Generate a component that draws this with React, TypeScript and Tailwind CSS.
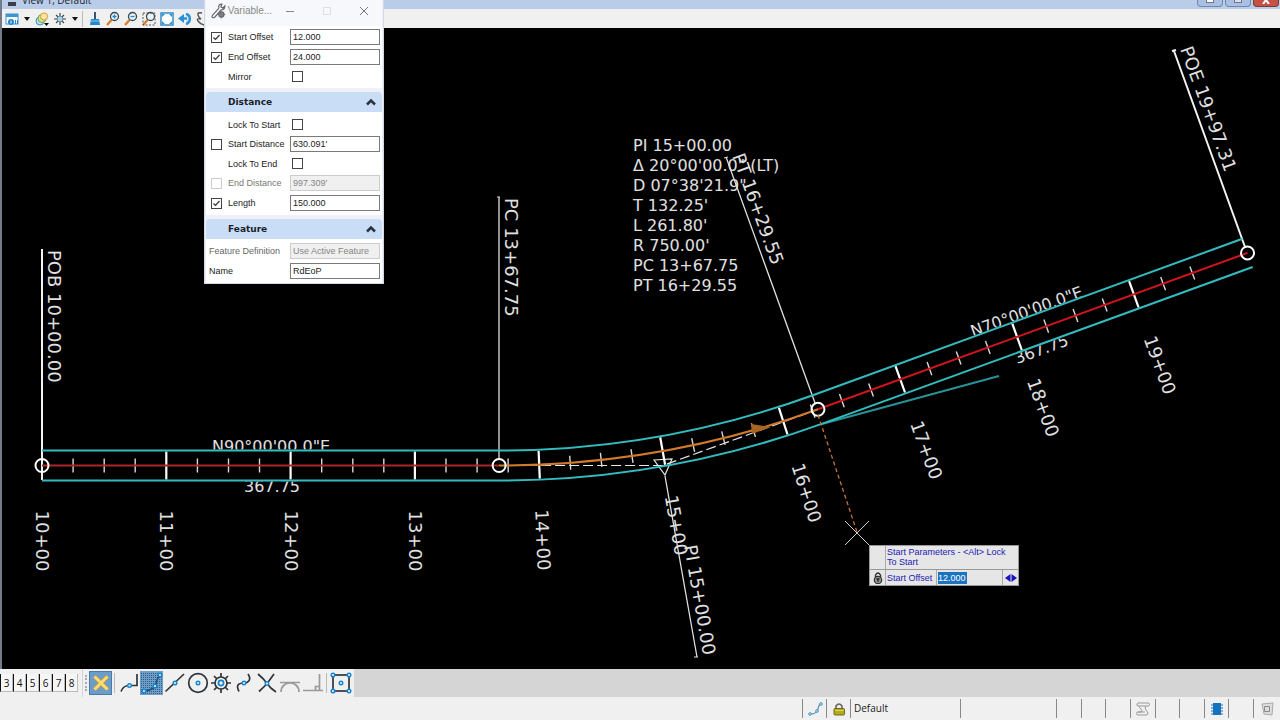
import React, { useState } from 'react';

// Drawing scale and alignment geometry (pixels, y down)
const SCALE = 1.243;
const START = { x: 42, y: 465.5 };
const PC_STATION = 1367.75;
const PT_STATION = 1629.55;
const POE_STATION = 1997.31;
const RADIUS = 750 * SCALE;
const PC = { x: START.x + (PC_STATION - 1000) * SCALE, y: START.y };
const CENTER = { x: PC.x, y: PC.y - RADIUS };

const placeAt = (station: number, offset = 0) => {
  if (station <= PC_STATION) {
    return { x: START.x + (station - 1000) * SCALE, y: START.y + offset, angle: 0 };
  }
  const arc = Math.min(station, PT_STATION) - PC_STATION;
  const theta = arc / 750;
  const past = Math.max(station - PT_STATION, 0) * SCALE;
  return {
    x: CENTER.x + (RADIUS + offset) * Math.sin(theta) + past * Math.cos(theta),
    y: CENTER.y + (RADIUS + offset) * Math.cos(theta) - past * Math.sin(theta),
    angle: (theta * 180) / Math.PI,
  };
};

const at = (station: number, offset = 0) => {
  const p = placeAt(station, offset);
  return `${p.x.toFixed(1)} ${p.y.toFixed(1)}`;
};

const edgePath = (offset: number) => {
  const r = RADIUS + offset;
  return `M${at(1000, offset)} L${at(PC_STATION, offset)} A${r} ${r} 0 0 0 ${at(PT_STATION, offset)} L${at(POE_STATION, offset)}`;
};

const ticks = Array.from({ length: 38 }, (_, i) => 1025 + i * 25);
const stations = Array.from({ length: 10 }, (_, i) => 1000 + i * 100);

const curveData = [
  'PI 15+00.00',
  'Δ 20°00\'00.0" (LT)',
  'D 07°38\'21.9"',
  "T 132.25'",
  "L 261.80'",
  "R 750.00'",
  'PC 13+67.75',
  'PT 16+29.55',
];

const AlignmentDrawing: React.FC = () => (
  <svg
    className="block h-full w-full font-['DejaVu_Sans',sans-serif]"
    viewBox="2 28 1278 641"
    preserveAspectRatio="xMinYMin slice"
    fill="none"
  >
    {/* Curve data and bearings */}
    <g fill="#e0e0e0" fontSize="16">
      {curveData.map((line, i) => (
        <text key={line} x="633" y={151 + i * 20}>{line}</text>
      ))}
      <text x="212" y="452">N90°00'00.0"E</text>
      <text x="244" y="492">367.75</text>
      <text transform="translate(973 337) rotate(-20)">N70°00'00.0"E</text>
      <text transform="translate(1017 364) rotate(-20)">367.75</text>
    </g>

    {/* Corridor surface */}
    <path d={edgePath(0)} stroke="#000" strokeWidth="32" />

    {/* Station labels */}
    <g fill="#e0e0e0" fontSize="18">
      {stations.map(station => {
        const p = placeAt(station);
        return (
          <text
            key={station}
            transform={`translate(${p.x} ${p.y}) rotate(${-p.angle}) translate(-6 45) rotate(90)`}
          >
            {station / 100}+00
          </text>
        );
      })}
      <text transform="translate(48 250) rotate(90)">POB 10+00.00</text>
      <text transform="translate(505 198) rotate(90)">PC 13+67.75</text>
      <text transform="translate(732 156) rotate(70)">PT 16+29.55</text>
      <text transform="translate(1180 49) rotate(70)">POE 19+97.31</text>
      <text transform="translate(684 546) rotate(80)">PI 15+00.00</text>
    </g>

    {/* Leader lines */}
    <path d="M42 249V480" stroke="#f2f2f2" strokeWidth="2" />
    <path d="M499 197V460M726 157L815 403M665 476L697 657" stroke="#dedede" strokeWidth="1.3" />
    <path d="M694 657h4M497 197h3M724 158l4-1" stroke="#dedede" />
    <path d="M1174 51L1245 247M1172 51l4-1" stroke="#f2f2f2" strokeWidth="2" />
    <path d={`M${at(PC_STATION)}L662.9 465.5L${at(PT_STATION)}`} stroke="#e8e8e8" strokeWidth="1.2" strokeDasharray="10 4" />
    <path d="M654 460L672 459L665 475Z" stroke="#e8e8e8" strokeWidth="1.2" />

    {/* Ticks along the centerline */}
    {ticks.map(station => {
      const major = station % 100 === 0;
      const half = major ? 14 : 7;
      return (
        <path
          key={station}
          d={`M${at(station, -half)}L${at(station, half)}`}
          stroke={major ? '#fff' : '#d8d8d8'}
          strokeWidth={major ? 2.2 : 1.4}
        />
      );
    })}

    {/* Centerline */}
    <path d={`M${at(1000)}L${at(PC_STATION)}`} stroke="#ab2429" strokeWidth="2" />
    <path d={`M${at(PT_STATION)}L${at(POE_STATION)}`} stroke="#d0161c" strokeWidth="2" />
    <path d={`M${at(PC_STATION)}A${RADIUS} ${RADIUS} 0 0 0 ${at(PT_STATION)}`} stroke="#d27a2c" strokeWidth="2" />
    <path d="M751 424L771 427L752 434Z" fill="#a9641f" />

    {/* Edges of pavement */}
    <path d="M822 424L999 376" stroke="#289299" strokeWidth="2" />
    <path d={edgePath(-15)} stroke="#33bcc0" strokeWidth="2" />
    <path d={edgePath(15)} stroke="#33bcc0" strokeWidth="2" />

    {[1000, PC_STATION, PT_STATION, POE_STATION].map(station => {
      const p = placeAt(station);
      return <circle key={station} cx={p.x} cy={p.y} r="6.5" stroke="#fff" strokeWidth="2" />;
    })}

    {/* Dynamic offset line and cursor */}
    <path d="M818 415L857 532" stroke="#c4723a" strokeWidth="1.3" strokeDasharray="4 3" />
    <path d="M845 521L869 545M869 521L845 545" stroke="#cfcfcf" />
  </svg>
);

const Caret: React.FC = () => (
  <svg className="h-1 w-1.5" viewBox="0 0 6 4"><path d="M0 0h6L3 4z" fill="#111" /></svg>
);

const Magnifier: React.FC<{ children?: React.ReactNode }> = ({ children }) => (
  <svg className="size-4" viewBox="0 0 16 16" fill="none">
    <path d="M6.5 9L2 14" stroke="#d9822b" strokeWidth="2.4" />
    <circle cx="9.5" cy="5.5" r="4" fill="#e9f5fc" stroke="#3b4652" strokeWidth="1.3" />
    {children}
  </svg>
);

const viewTools: { name: string; menu?: boolean; icon: React.ReactNode }[] = [
  {
    name: 'View Attributes',
    menu: true,
    icon: (
      <svg className="size-4" viewBox="0 0 16 16" fill="none">
        <rect x="2" y="3" width="12" height="10" fill="#fff" stroke="#3d94cf" />
        <path d="M2 4.5h12" stroke="#3d94cf" strokeWidth="3" />
        <circle cx="7" cy="11" r="3" fill="#1e86cc" />
        <path d="M7 9.5v3" stroke="#fff" />
        <path d="M11.500 9v4M13.500 9v4" stroke="#1e86cc" />
      </svg>
    ),
  },
  {
    name: 'Display Style',
    icon: (
      <svg className="size-4" viewBox="0 0 16 16" fill="none">
        <circle cx="6" cy="10" r="4" fill="#bce0ef" stroke="#3a91bb" />
        <circle cx="8" cy="7.5" r="4" fill="#cfe6a0" stroke="#71a83c" />
        <circle cx="10" cy="5.5" r="3.6" fill="#f7e3a4" stroke="#dc9a2e" />
        <path d="M10 12h5l-2.5 3z" fill="#111" />
      </svg>
    ),
  },
  {
    name: 'Adjust Brightness',
    menu: true,
    icon: (
      <svg className="size-4" viewBox="0 0 16 16" fill="none">
        <path d="M8 2v12M2 8h12M4 4l8 8M12 4l-8 8" stroke="#3d464e" strokeWidth="1.2" />
        <circle cx="8" cy="8" r="3" fill="#a9d3e4" stroke="#66808e" />
      </svg>
    ),
  },
  {
    name: 'Update View',
    icon: (
      <svg className="size-4" viewBox="0 0 16 16">
        <path d="M7 1h2v7H7z" fill="#35566e" />
        <path d="M4 8h8l1 6H3z" fill="#2489cc" />
        <path d="M4 10h8" stroke="#91c9ed" />
      </svg>
    ),
  },
  { name: 'Zoom In', icon: <Magnifier><path d="M7.5 5.5h4M9.5 3.5v4" stroke="#2084c8" strokeWidth="1.3" /></Magnifier> },
  { name: 'Zoom Out', icon: <Magnifier><path d="M7.5 5.5h4" stroke="#2084c8" strokeWidth="1.3" /></Magnifier> },
  { name: 'Window Area', icon: <Magnifier><rect x="2" y="2" width="12" height="12" stroke="#555" strokeDasharray="2 1.5" /></Magnifier> },
  {
    name: 'Fit View',
    icon: (
      <svg className="size-4" viewBox="0 0 16 16" fill="none">
        <rect x="2" y="2" width="12" height="12" fill="#fff" stroke="#2583c4" strokeWidth="1.4" />
        <path d="M3 6V3h3zM10 3h3v3zM13 10v3h-3zM6 13H3v-3z" fill="#2994d8" />
      </svg>
    ),
  },
  {
    name: 'Rotate View',
    icon: (
      <svg className="size-4" viewBox="0 0 16 16" fill="none">
        <path d="M4 7.5h6M9 3c5 1 5 8 0 10" stroke="#2691d6" strokeWidth="2.6" />
        <path d="M1 7.5L7 3v9z" fill="#2691d6" />
        <path d="M9 4.5c3 1 3 5 0 7" stroke="#8bcaef" />
      </svg>
    ),
  },
  {
    name: 'Pan View',
    icon: (
      <svg className="size-4" viewBox="0 0 16 16" fill="none">
        <path d="M7 2Q2 1 3 4T6 8Q1 7 3 10T9 14" stroke="#555" strokeWidth="1.4" />
      </svg>
    ),
  },
];

const Node: React.FC<{ x: number; y: number }> = ({ x, y }) => (
  <circle cx={x} cy={y} r="1.8" fill="#d8effc" stroke="#1684cc" strokeWidth="1.4" />
);

const INK = '#30343a';

const snapTools: { name: string; active?: boolean; icon: React.ReactNode }[] = [
  { name: 'Nearest Snap', icon: <><path d="M4 20.500Q6 14.500 12.500 14.500H20V3" stroke={INK} /><Node x={12.5} y={14.5} /></> },
  {
    name: 'Key-point Snap',
    active: true,
    icon: (
      <>
        <g stroke="#2e5d87" strokeWidth="1" strokeDasharray="1 1">
          {[2, 4, 6, 8, 10, 12, 14, 16, 18, 20, 22].map(y => <path key={y} d={`M1 ${y + 0.5}h22`} />)}
        </g>
        <path d="M4 20Q15 19 16 13T20 4" stroke="#1d4f7a" strokeWidth="1.6" />
        <Node x={4} y={20} /><Node x={15} y={15} /><Node x={20} y={4} />
      </>
    ),
  },
  { name: 'Midpoint Snap', icon: <><path d="M2.500 20.500L21 3" stroke={INK} /><Node x={12} y={12} /></> },
  { name: 'Center Snap', icon: <><circle cx="12" cy="12" r="9.3" stroke={INK} /><Node x={12} y={12} /></> },
  {
    name: 'Origin Snap',
    icon: (
      <>
        <circle cx="12" cy="12" r="6" stroke={INK} />
        <path d="M12 2v4M12 18v4M2 12h4M18 12h4M5 5l3 3M16 16l3 3M19 5l-3 3M8 16l-3 3" stroke={INK} />
        <circle cx="12" cy="12" r="2.6" stroke="#1684cc" />
      </>
    ),
  },
  { name: 'Bisector Snap', icon: <><path d="M7 20.500C3 13 8 12 12 12S20 9 16 3" stroke={INK} /><Node x={12} y={12} /></> },
  { name: 'Intersection Snap', icon: <><path d="M3 3Q9 8 12 12.500T21 21M19 3Q14 10 12 12.500T4 20.500" stroke={INK} /><Node x={12} y={12.5} /></> },
  { name: 'Tangent Snap', icon: <path d="M2 11.500h20M3 21c0-12 18-12 18 0" stroke="#9a9a9a" /> },
  { name: 'Perpendicular Snap', icon: <path d="M2 19.500h20M18.500 3v16M14.500 19v-3.500h4" stroke="#9a9a9a" /> },
];

const ToolButton: React.FC<{ name: string; className?: string; children: React.ReactNode }> = ({ name, className = '', children }) => (
  <button type="button" aria-label={name} className={`flex h-6 w-[23px] shrink-0 items-center justify-center ${className}`}>
    <svg className="size-6 shrink-0" viewBox="0 0 24 24" fill="none" strokeWidth="1.7">{children}</svg>
  </button>
);

const Checkbox: React.FC<{ id: string; label?: string; checked: boolean; disabled?: boolean; onChange: (v: boolean) => void }> = ({
  id, label, checked, disabled, onChange,
}) => (
  <span className="relative block size-[11px]">
    <input
      id={id}
      type="checkbox"
      aria-label={label}
      checked={checked}
      disabled={disabled}
      onChange={e => onChange(e.target.checked)}
      className="peer block size-[11px] appearance-none border border-[#444] bg-white disabled:border-[#ccc]"
    />
    <svg className="pointer-events-none absolute inset-0 hidden size-[11px] peer-checked:block" viewBox="0 0 11 11">
      <path d="M2.500 5.500l2 2 4-4.500" fill="none" stroke="#333" strokeWidth="1.2" />
    </svg>
  </span>
);

interface Field {
  name: string;
  label: string;
  kind: 'value' | 'toggle';
  lockable?: boolean;
  disabled?: boolean;
}

const offsetFields: Field[] = [
  { name: 'startOffset', label: 'Start Offset', kind: 'value', lockable: true },
  { name: 'endOffset', label: 'End Offset', kind: 'value', lockable: true },
  { name: 'mirror', label: 'Mirror', kind: 'toggle' },
];

const distanceFields: Field[] = [
  { name: 'lockToStart', label: 'Lock To Start', kind: 'toggle' },
  { name: 'startDistance', label: 'Start Distance', kind: 'value', lockable: true },
  { name: 'lockToEnd', label: 'Lock To End', kind: 'toggle' },
  { name: 'endDistance', label: 'End Distance', kind: 'value', lockable: true, disabled: true },
  { name: 'length', label: 'Length', kind: 'value', lockable: true },
];

const inputClass =
  'h-4 w-full min-w-0 border border-[#7a7a7a] bg-white px-0.5 text-[#222] outline-none disabled:border-[#ccc] disabled:bg-[#f0f0f0] disabled:text-[#858585]';

const SectionHeader: React.FC<{ title: string }> = ({ title }) => (
  <button
    type="button"
    className="mt-1 flex h-5 w-full items-center justify-between rounded-t-sm bg-[#c9ddf7] pr-1.5 pl-[22px] font-['DejaVu_Sans',sans-serif] text-[9px] font-bold text-[#1b1f2a]"
  >
    {title}
    <svg className="h-2 w-2.5" viewBox="0 0 10 8" fill="none"><path d="M1 6.500l4-4 4 4" stroke="#2b3340" strokeWidth="2.6" /></svg>
  </button>
);

const VariableOffsetDialog: React.FC = () => {
  const [values, setValues] = useState<Record<string, string>>({
    startOffset: '12.000',
    endOffset: '24.000',
    startDistance: "630.091'",
    endDistance: "997.309'",
    length: '150.000',
    feature: 'Use Active Feature',
    name: 'RdEoP',
  });
  const [checks, setChecks] = useState<Record<string, boolean>>({
    startOffset: true,
    endOffset: true,
    length: true,
  });

  const setValue = (name: string, value: string) => setValues(prev => ({ ...prev, [name]: value }));
  const setCheck = (name: string, value: boolean) => setChecks(prev => ({ ...prev, [name]: value }));

  const renderField = (field: Field) => (
    <div
      key={field.name}
      className={`grid grid-cols-[17px_62px_1fr] items-center pr-0.5 pl-[5px] ${field.kind === 'toggle' ? 'h-[19px]' : 'h-5'}`}
    >
      {field.lockable ? (
        <Checkbox
          id={`${field.name}-lock`}
          label={`Lock ${field.label}`}
          checked={!!checks[field.name]}
          disabled={field.disabled}
          onChange={v => setCheck(field.name, v)}
        />
      ) : <span />}
      <label htmlFor={field.name} className={`whitespace-nowrap ${field.disabled ? 'text-[#777]' : ''}`}>{field.label}</label>
      {field.kind === 'toggle' ? (
        <span className="pl-0.5">
          <Checkbox id={field.name} checked={!!checks[field.name]} onChange={v => setCheck(field.name, v)} />
        </span>
      ) : (
        <input
          id={field.name}
          className={inputClass}
          value={values[field.name]}
          disabled={field.disabled}
          onChange={e => setValue(field.name, e.target.value)}
        />
      )}
    </div>
  );

  return (
    <section className="absolute top-0 left-[204px] w-[180px] border-x border-b border-[#d5d8e2] bg-[#eff1f8] px-px font-['Liberation_Sans',sans-serif] text-[9px] leading-4 text-[#222]">
      <header className="flex h-[26px] items-center bg-[#f7f8fb] pb-1 text-[#888]">
        <svg className="ml-1 size-4" viewBox="0 0 16 16" fill="none">
          <path d="M2 13L9 5M9 5Q8 1 12 1L11 4l2 1 2-2Q15 7 11 7L5 14Q2 16 2 13" stroke="#666" strokeWidth="1.2" />
          <circle cx="11.5" cy="11.5" r="2.5" stroke="#666" strokeWidth="1.4" />
          <path d="M11.500 7.500v8M7.500 11.500h8M9 9l5 5M14 9l-5 5" stroke="#777" />
        </svg>
        <h1 className="ml-0.5 flex-1 text-[10px]">Variable...</h1>
        <button type="button" aria-label="Minimize" className="flex w-[37px] justify-center">
          <svg className="size-2.5" viewBox="0 0 10 10"><path d="M1 5.500h8" stroke="#888" /></svg>
        </button>
        <button type="button" aria-label="Maximize" className="flex w-[37px] justify-center">
          <svg className="size-2.5" viewBox="0 0 10 10" fill="none"><path d="M1.500 1.500h7v7h-7z" stroke="#dedede" /></svg>
        </button>
        <button type="button" aria-label="Close" className="flex w-[37px] justify-center">
          <svg className="size-2.5" viewBox="0 0 10 10"><path d="M1 1l8 8M9 1L1 9" stroke="#777" /></svg>
        </button>
      </header>

      <div className="bg-white pt-px pb-0.5">{offsetFields.map(renderField)}</div>

      <SectionHeader title="Distance" />
      <div className="bg-white pt-[3px] pb-0.5">{distanceFields.map(renderField)}</div>

      <SectionHeader title="Feature" />
      <div className="bg-white pt-0.5 pb-0.5">
        <div className="grid h-5 grid-cols-[81px_1fr] items-center pr-0.5 pl-[3px]">
          <label htmlFor="feature" className="whitespace-nowrap text-[#666]">Feature Definition</label>
          <input id="feature" className={inputClass} value={values.feature} disabled readOnly />
        </div>
        <div className="grid h-5 grid-cols-[81px_1fr] items-center pr-0.5 pl-[3px]">
          <label htmlFor="name">Name</label>
          <input id="name" className={inputClass} value={values.name} onChange={e => setValue('name', e.target.value)} />
        </div>
      </div>
    </section>
  );
};

const CursorPrompt: React.FC = () => {
  const [offset, setOffset] = useState('12.000');

  return (
    <div className="absolute top-[545px] left-[869px] w-[150px] border border-[#999] bg-[#e6e6e6] font-['Liberation_Sans',sans-serif] text-[9px] leading-[10px] text-[#241cb4]">
      <div className="flex h-6 border-b border-[#999]">
        <span className="w-4 shrink-0 border-r border-[#aaa]" />
        <p className="px-px pt-px whitespace-nowrap">Start Parameters - &lt;Alt&gt; Lock<br />To Start</p>
      </div>
      <div className="flex h-[15px] items-center">
        <span className="flex h-full w-4 shrink-0 items-center justify-center border-r border-[#aaa]">
          <svg className="h-3 w-2.5" viewBox="0 0 10 12" fill="none">
            <path d="M2.500 6V3Q5-1 7.500 3v3" stroke="#333" strokeWidth="1.4" />
            <circle cx="5" cy="8" r="3.7" fill="#999" stroke="#333" strokeWidth="1.2" />
            <path d="M5 6.500v3.500M3.500 7h3" stroke="#222" strokeWidth="1.3" />
          </svg>
        </span>
        <label htmlFor="prompt-offset" className="w-[50px] shrink-0 whitespace-nowrap pl-px">Start Offset</label>
        <span className="flex h-full flex-1 items-center border-x border-[#aaa] pl-px">
          <input
            id="prompt-offset"
            value={offset}
            onChange={e => setOffset(e.target.value)}
            className="h-3 w-[29px] bg-[#1c73bf] text-white outline-none"
          />
        </span>
        <button type="button" aria-label="Cycle value" className="flex w-[15px] shrink-0 justify-center">
          <svg className="h-2 w-3" viewBox="0 0 12 8"><path d="M5.500 0v8L0 4zM6.500 0v8L12 4z" fill="#1c14c0" /></svg>
        </button>
      </div>
    </div>
  );
};

const ViewHeader: React.FC = () => (
  <header className="h-7 shrink-0 bg-[#f0f0f0]">
    <div className="flex h-[9px] justify-between bg-[#b9cde9] pl-1">
      <div className="flex h-[6px] items-end gap-1.5">
        <span className="ml-0.5 h-1 w-2 bg-[#3a3f4a]" />
        <h2 className="font-['Open_Sans',sans-serif] text-[10px] leading-[12px] text-[#1c2430]">View 1, Default</h2>
      </div>
      <div className="flex h-[7px] gap-0.5">
        <button type="button" aria-label="Minimize view" className="flex w-[26px] justify-center rounded-b-sm border border-t-0 border-[#6f88ae] bg-[#a9c0e2]">
          <span className="h-[3px] w-2 border border-t-0 border-[#6b7688] bg-white" />
        </button>
        <button type="button" aria-label="Restore view" className="flex w-[26px] justify-center rounded-b-sm border border-t-0 border-[#6f88ae] bg-[#a9c0e2]">
          <span className="h-[3px] w-2 border border-t-0 border-[#6b7688] bg-[#d8e0ee]" />
        </button>
        <button type="button" aria-label="Close view" className="mr-px flex w-[26px] justify-center rounded-b-sm border border-t-0 border-[#7b3a38] bg-[#c65147]">
          <svg className="h-1 w-2" viewBox="0 0 8 4"><path d="M4 0L1 4M4 0l3 4" stroke="#fff" strokeWidth="2" /></svg>
        </button>
      </div>
    </div>
    <div className="flex h-[19px] items-center pl-0.5">
      {viewTools.map(tool => (
        <React.Fragment key={tool.name}>
          {tool.name === 'Update View' && <span className="mr-1 h-4 w-px bg-[#bbb]" />}
          <button type="button" aria-label={tool.name} className={`flex shrink-0 items-center ${tool.menu ? 'w-[30px] gap-1' : 'w-[18px]'}`}>
            {tool.icon}
            {tool.menu && <Caret />}
          </button>
        </React.Fragment>
      ))}
    </div>
  </header>
);

const SnapToolbar: React.FC = () => (
  <div className="flex h-7 shrink-0 bg-[#d5d5d5]">
    <div className="flex w-[82px] shrink-0 items-center bg-[#f0f0f0]">
      {[3, 4, 5, 6, 7, 8].map(n => (
        <button
          key={n}
          type="button"
          className="h-[18px] w-[13px] border-r border-b border-l border-r-[#bbb] border-b-[#bbb] border-l-[#111] bg-[#f6f6f6] font-['Open_Sans',sans-serif] text-[10px] leading-4 text-[#111]"
        >
          {n}
        </button>
      ))}
    </div>
    <div className="ml-px flex shrink-0 items-center bg-[#f0f0f0] pr-0.5">
      <span className="mr-0.5 ml-0.5 h-4 border-l-2 border-dotted border-[#aaa]" />
      <ToolButton name="AccuSnap" className="border border-[#4a7ba6] bg-[#6a9dcb]">
        <path d="M5.500 5.500l13 13M18.500 5.500l-13 13" stroke="#c8962c" strokeWidth="4.4" />
        <path d="M5.500 5.500l13 13M18.500 5.500l-13 13" stroke="#fbdc79" strokeWidth="3" />
      </ToolButton>
      <span className="mx-0.5 h-5 w-px bg-[#bbb]" />
      {snapTools.map(tool => (
        <ToolButton key={tool.name} name={tool.name} className={tool.active ? 'bg-[#6f9fc9]' : ''}>
          {tool.icon}
        </ToolButton>
      ))}
      <span className="mx-0.5 h-5 w-px bg-[#bbb]" />
      <ToolButton name="Multi-snap">
        <rect x="4" y="4" width="16" height="16" stroke={INK} />
        <Node x={4} y={4} /><Node x={20} y={4} /><Node x={4} y={20} /><Node x={20} y={20} /><Node x={12} y={12} />
      </ToolButton>
    </div>
  </div>
);

const StatusBar: React.FC = () => (
  <footer className="flex h-[23px] shrink-0 items-center justify-end bg-[#f0f0f0] py-0.5 text-[#222]">
    <button type="button" aria-label="Active snap" className="flex h-full w-6 items-center justify-center border-l border-[#888]">
      <svg className="size-4" viewBox="0 0 16 16" fill="none">
        <path d="M3 13Q10 13 11 8T14 3" stroke="#5a87a6" strokeWidth="1.2" />
        <g fill="#fff" stroke="#2d8fc9">
          <circle cx="3" cy="13" r="1.3" />
          <circle cx="10" cy="10" r="1.3" />
          <circle cx="14" cy="3" r="1.3" />
        </g>
      </svg>
    </button>
    <button type="button" aria-label="Locks" className="flex h-full w-6 items-center justify-center border-l border-[#888]">
      <svg className="size-3.5" viewBox="0 0 14 14" fill="none">
        <path d="M4 7V4q3-4 6 0v3" stroke="#666" strokeWidth="1.6" />
        <rect x="2" y="6.5" width="10.5" height="6.5" rx="1" fill="#b4aa1c" stroke="#6f6a17" />
        <path d="M3 8.500h8.500" stroke="#ddd65c" />
      </svg>
    </button>
    <button type="button" className="h-full w-[110px] border-l border-[#888] pl-[3px] text-left font-['Open_Sans',sans-serif] text-[10px]">Default</button>
    <span className="h-full w-24 border-l border-[#888]" />
    <div className="grid h-full w-[197px] grid-cols-8">
      {Array.from({ length: 8 }, (_, i) => (
        <span key={i} className="flex items-center justify-center border-l border-[#888]">
          {i === 3 && (
            <svg className="size-4" viewBox="0 0 16 16" fill="none">
              <path d="M4 2h9a1.500 1.500 0 0 1 0 3h-2q-2 2 0 4t2 4q-1 1-2 1H3a1.500 1.500 0 0 1 0-3h3Q8 10 6 8T4 5Q1 5 2 3t2-1M4 5h7M3 11h7" stroke="#999" />
            </svg>
          )}
          {i === 6 && (
            <svg className="size-3.5" viewBox="0 0 14 14">
              <path d="M3 1h8v12H3z" fill="#1672bd" />
              <path d="M1 3h3M1 6h3M1 9h3M1 12h3M10 3h3M10 6h3M10 9h3M10 12h3" stroke="#1672bd" strokeWidth="1.2" />
            </svg>
          )}
        </span>
      ))}
    </div>
    <span className="flex h-full w-[27px] items-center justify-center border-l border-[#888]">
      <svg className="size-3.5" viewBox="0 0 14 14" fill="none">
        <path d="M2 2l11-1-1 12-8-1z" fill="#ddd" stroke="#aaa" />
        <path d="M4.500 4.500h5v5h-5z" stroke="#888" />
      </svg>
    </span>
  </footer>
);

const App: React.FC = () => (
  <div className="relative flex h-screen flex-col overflow-hidden bg-[#f0f0f0]">
    <main className="flex min-h-0 flex-1 flex-col border-l-2 border-[#747b88] bg-black">
      <ViewHeader />
      <div className="min-h-0 flex-1">
        <AlignmentDrawing />
      </div>
    </main>
    <SnapToolbar />
    <StatusBar />
    <VariableOffsetDialog />
    <CursorPrompt />
  </div>
);

export default App;
